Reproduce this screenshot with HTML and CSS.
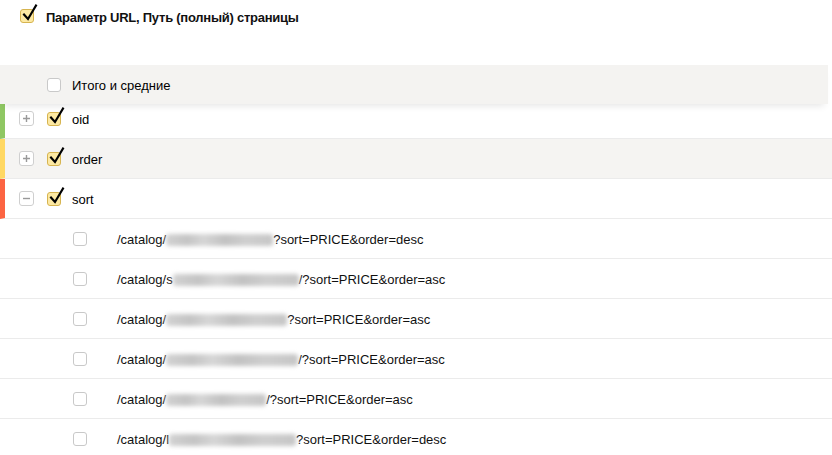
FILE: index.html
```html
<!DOCTYPE html>
<html lang="ru">
<head>
<meta charset="utf-8">
<title>Параметры URL</title>
<link rel="stylesheet" href="styles.css">
</head>
<body>
<div class="top">
  <span class="cb checked"><svg class="tick" viewBox="0 0 20 22" width="20" height="22"><path d="M3 12.5 L7 17 L15 3.5" fill="none" stroke="#000" stroke-width="2.1" stroke-linecap="square"/></svg></span>
  <span class="title">Параметр URL, Путь (полный) страницы</span>
</div>
<div class="header">
  <span class="cb"></span>
  <span class="label">Итого и средние</span>
</div>
<div class="rows">
  <div class="row group bar-green">
    <span class="exp"><svg viewBox="0 0 15 15" width="15" height="15"><path d="M4 7.5 H11 M7.5 4 V11" stroke="#999" stroke-width="1.4"/></svg></span>
    <span class="cb checked"><svg class="tick" viewBox="0 0 20 22" width="20" height="22"><path d="M3 12.5 L7 17 L15 3.5" fill="none" stroke="#000" stroke-width="2.1" stroke-linecap="square"/></svg></span>
    <span class="label">oid</span>
  </div>
  <div class="row group alt bar-yellow">
    <span class="exp"><svg viewBox="0 0 15 15" width="15" height="15"><path d="M4 7.5 H11 M7.5 4 V11" stroke="#999" stroke-width="1.4"/></svg></span>
    <span class="cb checked"><svg class="tick" viewBox="0 0 20 22" width="20" height="22"><path d="M3 12.5 L7 17 L15 3.5" fill="none" stroke="#000" stroke-width="2.1" stroke-linecap="square"/></svg></span>
    <span class="label">order</span>
  </div>
  <div class="row group bar-red">
    <span class="exp"><svg viewBox="0 0 15 15" width="15" height="15"><path d="M4 7.5 H11" stroke="#999" stroke-width="1.4"/></svg></span>
    <span class="cb checked"><svg class="tick" viewBox="0 0 20 22" width="20" height="22"><path d="M3 12.5 L7 17 L15 3.5" fill="none" stroke="#000" stroke-width="2.1" stroke-linecap="square"/></svg></span>
    <span class="label">sort</span>
  </div>
  <div class="row child">
    <span class="cb"></span>
    <span class="url">/catalog/<span class="blur b1"></span>?sort=PRICE&amp;order=desc</span>
  </div>
  <div class="row child">
    <span class="cb"></span>
    <span class="url">/catalog/s<span class="blur b2"></span>/?sort=PRICE&amp;order=asc</span>
  </div>
  <div class="row child">
    <span class="cb"></span>
    <span class="url">/catalog/<span class="blur b3"></span>?sort=PRICE&amp;order=asc</span>
  </div>
  <div class="row child">
    <span class="cb"></span>
    <span class="url">/catalog/<span class="blur b4"></span>/?sort=PRICE&amp;order=asc</span>
  </div>
  <div class="row child">
    <span class="cb"></span>
    <span class="url">/catalog/<span class="blur b5"></span>/?sort=PRICE&amp;order=asc</span>
  </div>
  <div class="row child">
    <span class="cb"></span>
    <span class="url">/catalog/l<span class="blur b6"></span>?sort=PRICE&amp;order=desc</span>
  </div>
</div>
</body>
</html>
```
FILE: styles.css
```css
* { box-sizing: border-box; }
html, body { margin: 0; padding: 0; background: #fff; }
body {
  font-family: "Liberation Sans", Arial, sans-serif;
  font-size: 13px;
  color: #000;
  width: 832px;
  overflow: hidden;
}
.top {
  height: 65px;
  display: flex;
  align-items: flex-start;
  padding: 9px 0 0 20px;
}
.top .title {
  margin-left: 12px;
  font-weight: bold;
  line-height: 15px;
  margin-top: 1px;
  letter-spacing: -0.25px;
  color: #111;
}
.cb {
  position: relative;
  display: inline-block;
  flex: none;
  width: 14px;
  height: 14px;
  border: 1px solid #c9c9c9;
  border-radius: 3px;
  background: #fff;
}
.cb.checked {
  background: #fde9a3;
  border-color: #d6b450;
}
.cb .tick {
  position: absolute;
  left: 0px;
  top: -8px;
}
.header {
  position: relative;
  z-index: 1;
  width: 828px;
  height: 39px;
  background: #f4f3f1;
  display: flex;
  align-items: center;
  padding-left: 47px;
  box-shadow: 0 6px 7px -4px rgba(0,0,0,0.1);
}
.header .cb { margin-top: 1px; }
.label { margin-left: 11px; margin-top: 1px; }
.rows { margin-top: -5px; }
.row {
  height: 40px;
  display: flex;
  align-items: center;
  border-bottom: 1px solid #ebebeb;
  background: #fff;
}
.row.alt { background: #f5f4f2; }
.row.group { border-left: 5px solid transparent; padding-left: 14px; }
.bar-green { border-left-color: #8fc763 !important; }
.bar-yellow { border-left-color: #ffd863 !important; }
.bar-red { border-left-color: #fc6442 !important; }
.exp {
  display: inline-flex;
  flex: none;
  width: 15px;
  height: 15px;
  border: 1px solid #cfcfcf;
  border-radius: 3px;
  background: #fff;
  margin-right: 13px;
}
.exp svg { margin: -1px; }
.row.child { padding-left: 73px; }
.url { margin-left: 30px; white-space: nowrap; margin-top: 1px; color: #111; }
.blur {
  display: inline-block;
  vertical-align: -2px;
  height: 12px;
  background: linear-gradient(90deg, #d2d2d2 0%, #c4c4c4 20%, #d6d6d6 35%, #c2c2c2 55%, #cfcfcf 75%, #c6c6c6 100%);
  filter: blur(2px);
  border-radius: 3px;
}
.b1 { width: 107px; }
.b2 { width: 126px; }
.b3 { width: 121px; }
.b4 { width: 132px; }
.b5 { width: 100px; }
.b6 { width: 127px; }
```
